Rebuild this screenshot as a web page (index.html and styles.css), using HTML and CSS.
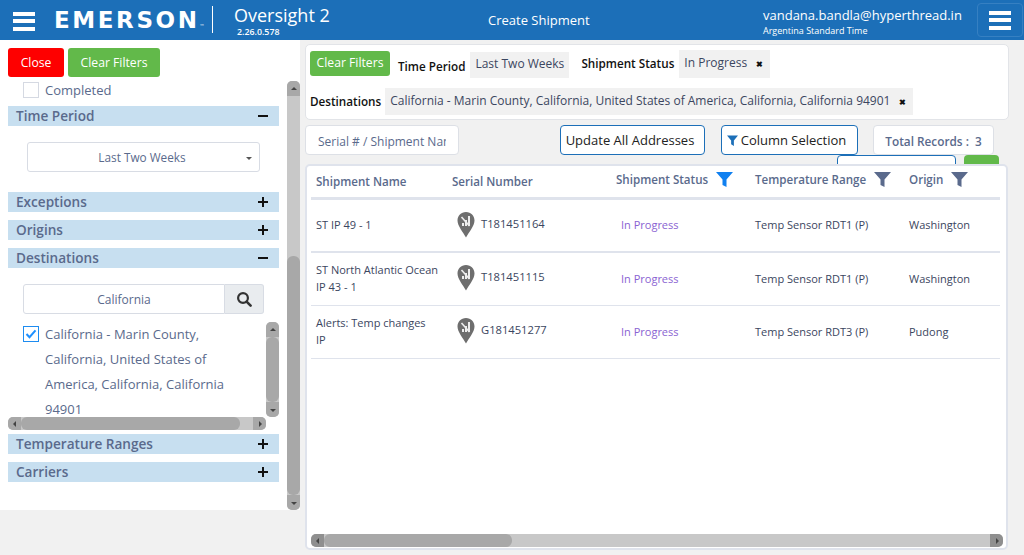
FILE: index.html
```html
<!DOCTYPE html>
<html lang="en">
<head>
<meta charset="utf-8">
<title>Create Shipment</title>
<link rel="stylesheet" href="styles.css">
</head>
<body>
<header class="topbar">
  <div class="burger burger-left"><span></span><span></span><span></span></div>
  <div class="logo">EMERSON<small>™</small></div>
  <div class="divider"></div>
  <div class="product"><div class="product-name">Oversight 2</div><div class="product-ver">2.26.0.578</div></div>
  <div class="page-title">Create Shipment</div>
  <div class="user"><div class="user-mail">vandana.bandla@hyperthread.in</div><div class="user-tz">Argentina Standard Time</div></div>
  <div class="menu-btn"><div class="burger"><span></span><span></span><span></span></div></div>
</header>
<main class="layout">
  <aside class="sidebar">
    <div class="side-col">
      <div class="side-actions"><button class="btn btn-red">Close</button><button class="btn btn-green">Clear Filters</button></div>
      <div class="check-row"><span class="check"></span><span>Completed</span></div>
      <div class="bar"><span>Time Period</span><b class="minus"></b></div>
      <div class="select-wrap"><div class="select">Last Two Weeks<i class="caret"></i></div></div>
      <div class="bar"><span>Exceptions</span><b class="plus"></b></div>
      <div class="bar"><span>Origins</span><b class="plus"></b></div>
      <div class="bar"><span>Destinations</span><b class="minus"></b></div>
      <div class="search"><div class="search-input">California</div><div class="search-btn"><svg width="16" height="16" viewBox="0 0 16 16"><circle cx="7" cy="7" r="4.9" fill="none" stroke="#333" stroke-width="2.2"/><path d="M10.6 10.6 14.6 14.6" stroke="#333" stroke-width="2.6" stroke-linecap="round"/></svg></div></div>
      <div class="dest-list">
        <div class="dest-body">
          <div class="dest-text"><span class="check check-on"><svg width="12" height="10" viewBox="0 0 12 10"><path d="M1.5 5 4.5 8.2 10.5 1.3" fill="none" stroke="#1e90ff" stroke-width="2"/></svg></span><span class="dest-label">California - Marin County, California, United States of America, California, California 94901</span></div>
          <div class="sb sb-v dest-v"><i class="arr up"></i><i class="thumb"></i><i class="arr down"></i></div>
        </div>
        <div class="sb sb-h dest-h"><i class="arr left"></i><i class="thumb"></i><i class="arr right"></i></div>
      </div>
      <div class="bar bar-tr"><span>Temperature Ranges</span><b class="plus"></b></div>
      <div class="bar"><span>Carriers</span><b class="plus"></b></div>
    </div>
    <div class="sb sb-v side-v"><i class="arr up"></i><i class="track"></i><i class="thumb"></i><i class="arr down"></i></div>
  </aside>
  <section class="content">
    <div class="filters">
      <div class="filter-row row-1">
        <button class="btn btn-green btn-small">Clear Filters</button>
        <span class="flabel fl-time">Time Period</span><span class="chip chip-time">Last Two Weeks</span>
        <span class="flabel fl-status">Shipment Status</span><span class="chip chip-status">In Progress<b class="x">✖</b></span>
      </div>
      <div class="filter-row row-2">
        <span class="flabel fl-dest">Destinations</span><span class="chip chip-dest">California - Marin County, California, United States of America, California, California 94901<b class="x">✖</b></span>
      </div>
    </div>
    <div class="tools">
      <input class="serial" type="text" placeholder="Serial # / Shipment Name">
      <button class="tool tool-update">Update All Addresses</button>
      <button class="tool tool-col"><svg width="11" height="11" viewBox="0 0 12 12"><path d="M0 .5H12L7.5 6V12L4.5 10V6Z" fill="#1c6fb8"/></svg>Column Selection</button>
      <div class="total">Total Records :&nbsp; 3</div>
    </div>
    <div class="peek"><div class="peek-box"></div><div class="peek-green"></div></div>
    <div class="card">
      <div class="table">
        <div class="row head">
          <div class="c1">Shipment Name</div>
          <div class="c2">Serial Number</div>
          <div class="c3 up-h">Shipment Status<svg class="fn" width="17" height="17" viewBox="0 0 17 17"><path d="M0 1H17L10.5 8.5V16L6.500 14V8.500Z" fill="#1080f0"/></svg></div>
          <div class="c4 up-h">Temperature Range<svg class="fn" width="17" height="17" viewBox="0 0 17 17"><path d="M0 1H17L10.5 8.5V16L6.500 14V8.500Z" fill="#5a6a8c"/></svg></div>
          <div class="c5 up-h">Origin<svg class="fn" width="17" height="17" viewBox="0 0 17 17"><path d="M0 1H17L10.5 8.5V16L6.500 14V8.500Z" fill="#5a6a8c"/></svg></div>
        </div>
        <div class="row r-thick">
          <div class="c1">ST IP 49 - 1</div>
          <div class="c2"><svg class="pin" width="18" height="26" viewBox="0 0 18 26"><path d="M9 0C4 0 .5 3.800.5 8.500.5 14 6 20 9 25.500 12 20 17.500 14 17.500 8.500 17.500 3.800 14 0 9 0Z" fill="#6e6e6e"/><path d="M5 11h2v3H5ZM8 8h2v6H8ZM11 4h2v10h-2Z" fill="#eee"/><path d="M4.500 5l8 9" stroke="#eee" stroke-width="1.600"/></svg><span>T181451164</span></div>
          <div class="c3 status">In Progress</div>
          <div class="c4">Temp Sensor RDT1 (P)</div>
          <div class="c5">Washington</div>
        </div>
        <div class="row">
          <div class="c1">ST North Atlantic Ocean IP 43 - 1</div>
          <div class="c2"><svg class="pin" width="18" height="26" viewBox="0 0 18 26"><path d="M9 0C4 0 .5 3.800.5 8.500.5 14 6 20 9 25.500 12 20 17.500 14 17.500 8.500 17.500 3.800 14 0 9 0Z" fill="#6e6e6e"/><path d="M5 11h2v3H5ZM8 8h2v6H8ZM11 4h2v10h-2Z" fill="#eee"/><path d="M4.500 5l8 9" stroke="#eee" stroke-width="1.600"/></svg><span>T181451115</span></div>
          <div class="c3 status">In Progress</div>
          <div class="c4">Temp Sensor RDT1 (P)</div>
          <div class="c5">Washington</div>
        </div>
        <div class="row">
          <div class="c1">Alerts: Temp changes<br>IP</div>
          <div class="c2"><svg class="pin" width="18" height="26" viewBox="0 0 18 26"><path d="M9 0C4 0 .5 3.800.5 8.500.5 14 6 20 9 25.500 12 20 17.500 14 17.500 8.500 17.500 3.800 14 0 9 0Z" fill="#6e6e6e"/><path d="M5 11h2v3H5ZM8 8h2v6H8ZM11 4h2v10h-2Z" fill="#eee"/><path d="M4.500 5l8 9" stroke="#eee" stroke-width="1.600"/></svg><span>G181451277</span></div>
          <div class="c3 status">In Progress</div>
          <div class="c4">Temp Sensor RDT3 (P)</div>
          <div class="c5">Pudong</div>
        </div>
      </div>
      <div class="sb sb-h card-h"><i class="arr left"></i><i class="thumb"></i><i class="arr right"></i></div>
    </div>
  </section>
</main>
</body>
</html>
```

FILE: styles.css
```css
* { box-sizing: border-box; }
html, body { margin: 0; height: 100%; }
body { background: #f1f1f1; font-family: "Open Sans", sans-serif; font-size: 13px; color: #5a6a8c; overflow: hidden; }
button { font-family: inherit; cursor: pointer; }

/* header */
.topbar { height: 40px; background: #1c6fb8; color: #fff; display: flex; align-items: flex-start; }
.burger { width: 22px; display: flex; flex-direction: column; gap: 3.5px; }
.burger span { display: block; height: 4px; background: #fff; }
.burger-left { margin: 11.500px 0 0 13px; }
.logo { margin: 5px 0 0 19px; width: 143px; font: bold 23px/30px "DejaVu Sans", sans-serif; letter-spacing: 2.600px; white-space: nowrap; }
.logo small { font-size: 5px; letter-spacing: 0; font-weight: normal; }
.divider { width: 1px; height: 27px; background: #fff; margin: 6px 0 0 15px; }
.product { margin: 4px 0 0 21px; width: 200px; }
.product-name { font-size: 18px; line-height: 22px; }
.product-ver { font-size: 8.800px; line-height: 10px; margin: 1px 0 0 3px; font-weight: 600; }
.page-title { margin: 11px 0 0 54px; width: 275px; font-size: 13px; line-height: 18px; }
.user { width: 214px; }
.user-mail { font-size: 13px; line-height: 18px; margin-top: 6px; }
.user-tz { font-size: 9px; line-height: 12px; margin-top: 1px; }
.menu-btn { width: 46px; height: 34px; margin: 3px 0 0 0; border: 1px solid #3680c2; border-radius: 4px; display: flex; align-items: center; justify-content: center; }
.layout { display: flex; align-items: flex-start; }

/* sidebar */
.sidebar { width: 300px; height: 470px; background: #fff; padding: 8px 0 0 8px; display: flex; flex-shrink: 0; }
.side-col { width: 271px; }
.side-actions { display: flex; gap: 4px; }
.btn { height: 29px; border: 0; border-radius: 3px; color: #fff; font-size: 12.200px; padding: 0; }
.btn-red { width: 56px; background: #fe0000; }
.btn-green { width: 92px; background: #62b94a; }
.btn-small { width: 80px; height: 25px; padding-bottom: 2px; }
.check-row { display: flex; align-items: center; gap: 6px; height: 16px; margin: 5px 0 0 15px; }
.check { width: 16px; height: 16px; border: 1px solid #d5d9e2; display: inline-flex; align-items: center; justify-content: center; flex-shrink: 0; background: #fff; }
.check-on { border-color: #1e8cf0; }
.bar { height: 20px; margin-top: 8px; background: #c7dff0; display: flex; justify-content: space-between; align-items: center; padding: 0 11px 1px 8px; font-size: 13.600px; font-weight: 600; color: #5a6a8c; }
.plus, .minus { position: relative; width: 10px; height: 10px; display: block; }
.plus::before, .minus::before { content: ""; position: absolute; left: 0; right: 0; top: 4px; height: 2px; background: #111; }
.plus::after { content: ""; position: absolute; top: 0; bottom: 0; left: 4px; width: 2px; background: #111; }
.select-wrap { padding: 16px 19px 12px 19px; }
.select { height: 30px; border: 1px solid #d8dce4; border-radius: 3px; display: flex; align-items: center; justify-content: center; font-size: 11.800px; position: relative; padding: 0 3px 1px 0; }
.caret { position: absolute; right: 7px; top: 14px; border: 3px solid transparent; border-top: 3px solid #555; border-bottom: 0; }
.search { display: flex; margin: 16px 15px 0 15px; height: 30px; }
.search-input { flex: 1; border: 1px solid #d8dce4; border-radius: 3px 0 0 3px; display: flex; align-items: center; justify-content: center; font-size: 12px; }
.search-btn { width: 39px; background: #e9ecef; border: 1px solid #d8dce4; border-left: 0; border-radius: 0 3px 3px 0; display: flex; align-items: center; justify-content: center; }
.dest-list { margin-top: 8px; }
.dest-body { display: flex; height: 95px; overflow: hidden; }
.dest-text { width: 258px; padding-left: 15px; display: flex; gap: 6px; font-size: 13px; line-height: 25px; }
.dest-text .check { margin-top: 4px; }
.dest-label { width: 190px; height: 100px; }
.bar-tr { margin-top: 4px; }

/* scrollbars */
.sb { display: flex; background: #c8c8c8; border-radius: 5px; flex-shrink: 0; }
.sb i { display: block; flex-shrink: 0; }
.sb-v { width: 13px; flex-direction: column; }
.sb-h { height: 13px; }
.sb .thumb { background: #a8a8a8; border-radius: 6px; }
.sb .arr { background: #a8a8a8; position: relative; }
.sb-v .arr { height: 15px; }
.sb-h .arr { width: 13px; }
.sb .up { border-radius: 5px 5px 0 0; }
.sb .down { border-radius: 0 0 5px 5px; }
.sb .left { border-radius: 5px 0 0 5px; }
.sb .right { border-radius: 0 5px 5px 0; }
.sb .arr::after { content: ""; position: absolute; left: 50%; top: 50%; margin: -3px 0 0 -3px; border: 3px solid transparent; }
.sb .up::after { border-bottom-color: #444; border-top-width: 0; margin-top: -2px; }
.sb .down::after { border-top-color: #444; border-bottom-width: 0; margin-top: -1px; }
.sb .left::after { border-right-color: #444; border-left-width: 0; margin-left: -2px; }
.sb .right::after { border-left-color: #444; border-right-width: 0; margin-left: -1px; }
.dest-v .thumb { height: 65px; }
.dest-h { width: 258px; }
.dest-h .thumb { width: 219px; }
.dest-h .right { margin-left: auto; }
.side-v { height: 429px; margin: 33px 0 0 8px; }
.side-v .track { height: 160px; }
.side-v .thumb { height: 239px; }

/* content */
.content { width: 704px; margin: 4px 0 0 5px; }
.filters { height: 76px; background: #fff; border: 1px solid #e2e4e8; border-radius: 5px; }
.filter-row { display: flex; align-items: flex-start; position: relative; }
.row-1 { padding: 6px 0 0 4px; height: 43px; }
.row-2 { padding-left: 4px; }
.flabel { color: #111; font-weight: 600; font-size: 11.700px; line-height: 18px; white-space: nowrap; }
.chip { background: #f1f1f1; color: #3b4660; font-size: 12px; padding: 0 5px; white-space: nowrap; line-height: 26px; }
.fl-time { margin: 6px 5px 0 8px; }
.chip-time { margin: 1px 0 0 0; width: 99px; line-height: 24px; height: 26px; }
.fl-status { margin: 3px 5px 0 12px; }
.chip-status { margin: -1px 0 0; height: 28px; width: 91px; }
.chip-dest { width: 528px; height: 27px; margin-top: 0; }
.fl-dest { margin: 4px 4px 0 0; }
.x { color: #111; font-size: 8px; margin-left: 9px; }
.tools { display: flex; align-items: stretch; height: 30px; margin-top: 5px; }
.serial { width: 154px; border: 1px solid #dde0e6; border-radius: 4px; background: #fff; padding: 2px 12px 0; font-family: inherit; font-size: 12px; outline: none; }
.serial::placeholder { color: #5a6a8c; opacity: 1; }
.tool { background: #fff; border: 1px solid #1c6fb8; border-radius: 4px; font-size: 13px; color: #222; white-space: nowrap; }
.tool-update { width: 145px; margin-left: 101px; padding: 0 5px 0 0; }
.tool-col { width: 137px; margin-left: 16px; padding: 0 6px 0 0; }
.tool-col svg { margin-right: 3px; vertical-align: -1px; }
.total { width: 121px; margin-left: 15px; background: #fff; border: 1px solid #dde0e6; border-radius: 4px; text-align: center; line-height: 30px; font-size: 11.800px; font-weight: 600; }
.peek { height: 9px; display: flex; overflow: hidden; padding-left: 532px; }
.peek-box { width: 119px; height: 20px; background: #fff; border: 1px solid #1c6fb8; border-radius: 4px; }
.peek-green { width: 35px; height: 20px; margin-left: 8px; background: #62b94a; border-radius: 4px; }

/* table */
.card { width: 703px; height: 386px; background: #fff; border: 2px solid #dfe3ec; border-radius: 5px; padding: 0 3px 0 4px; display: flex; flex-direction: column; }
.table { flex: 1; }
.row { display: grid; grid-template-columns: 141px 164px 139px 154px 94px; height: 53px; padding-bottom: 2px; border-bottom: 1px solid #dfe3ec; align-items: center; font-size: 11px; color: #3b4660; margin-right: 3px; }
.row > div { padding-left: 5px; }
.row > .c4, .row > .c5 { padding-left: 0; }
.head { height: 34px; padding-bottom: 0; border-bottom: 3px solid #dfe3ec; font-size: 11.600px; font-weight: 600; color: #5a6a8c; }
.r-thick { border-bottom-width: 2px; }
.head .up-h { display: flex; align-items: center; gap: 8px; white-space: nowrap; margin-top: -5px; padding-left: 0; }
.fn { flex-shrink: 0; }
.row .c2 { display: flex; align-items: center; gap: 6px; font-size: 11.200px; }
.row.head .c2 { display: block; padding-left: 0; font-size: 11.600px; }
.pin { flex-shrink: 0; }
.c2 span { margin-top: -3px; }
.c1 { line-height: 17px; padding-right: 6px; }
.status { color: #8a63d2; }
.card-h { height: 13px; margin: 0 0 1px 0; }
.card-h .thumb { width: 188px; }
.card-h .arr { background: #8f8f8f; }
.card-h .right { margin-left: auto; }
```
